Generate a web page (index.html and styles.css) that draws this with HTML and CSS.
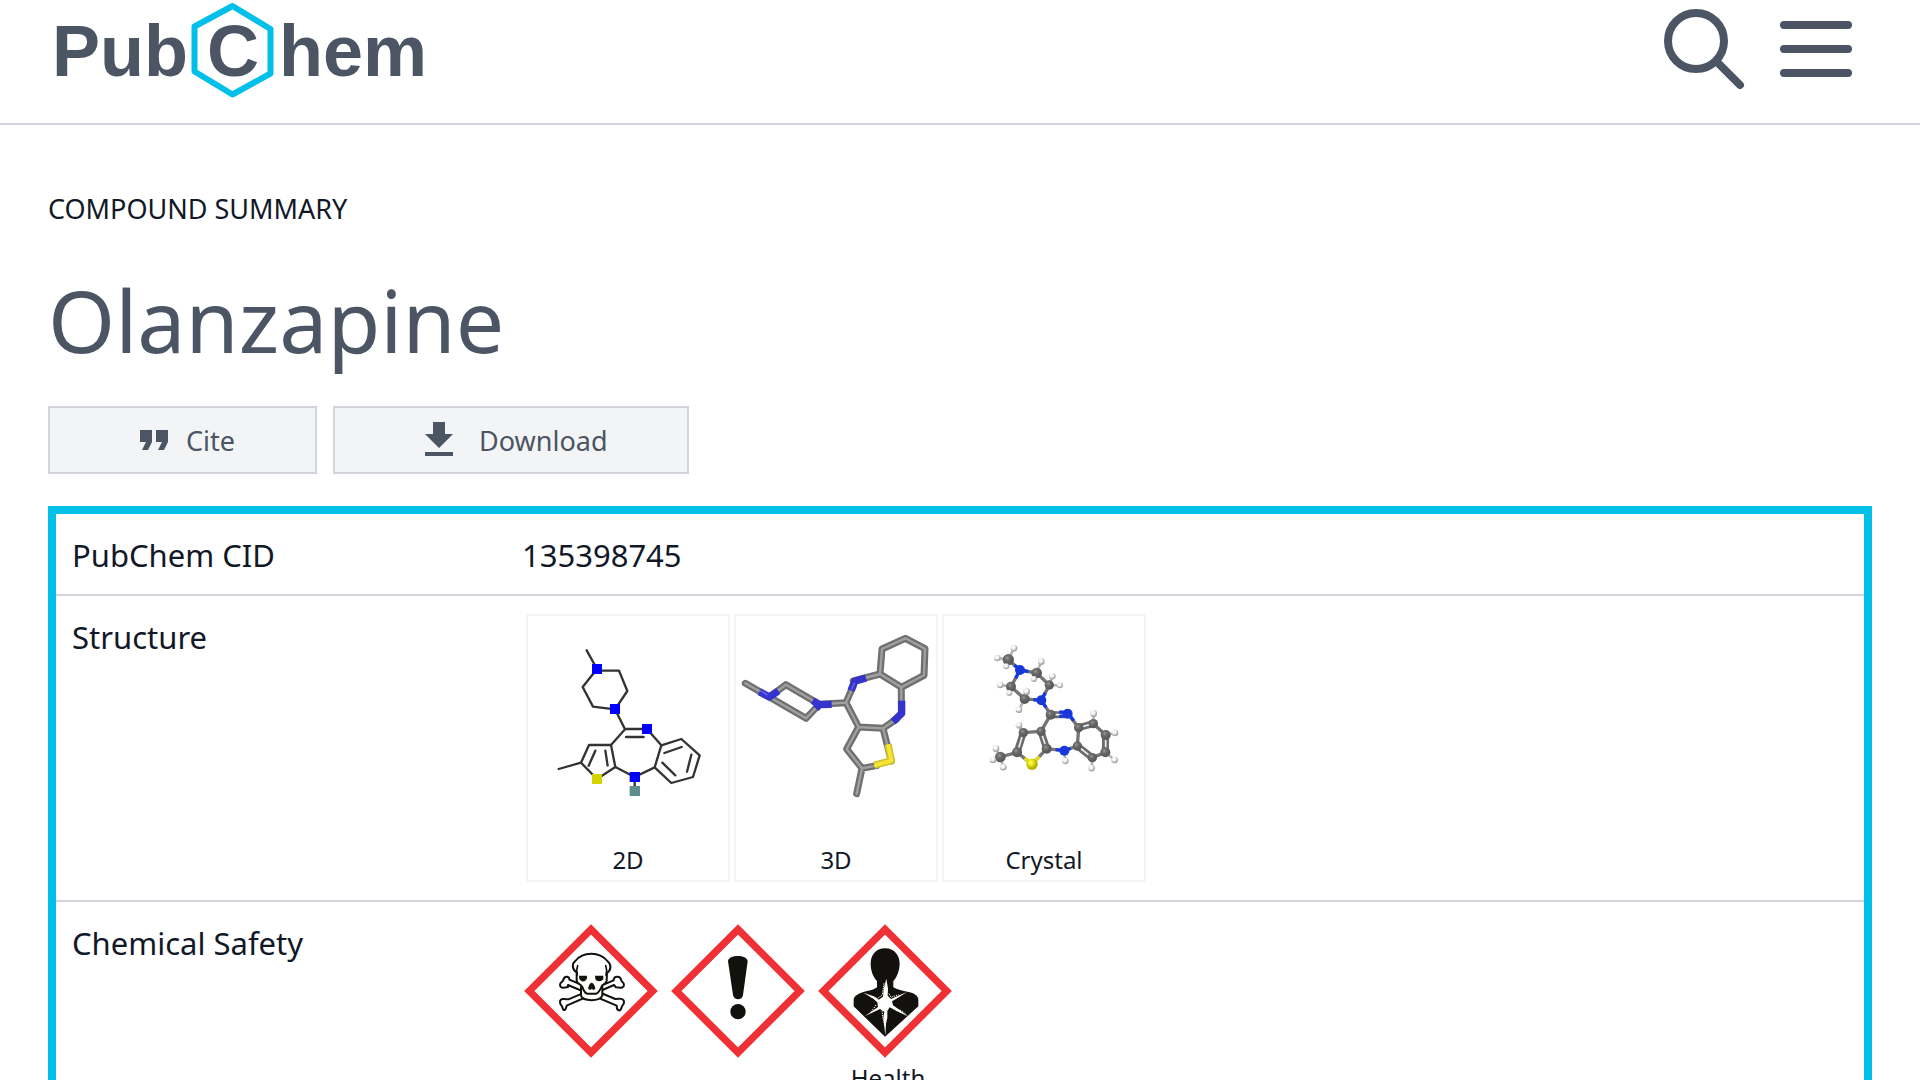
FILE: index.html
```html
<!DOCTYPE html>
<html lang="en">
<head>
<meta charset="utf-8">
<meta name="viewport" content="width=device-width, initial-scale=1">
<title>Olanzapine | PubChem</title>
<link rel="stylesheet" href="styles.css">
</head>
<body>
<header class="site-header">
  <a class="logo" href="#" aria-label="PubChem">
    <svg width="376" height="100" viewBox="50 0 376 100">
      <path class="logo-hex" d="M232.500 6 270.500 29V73.500L232.500 94.500 194.500 71.500V26.500Z"/>
      <text class="logo-text" x="52" y="76">Pub</text>
      <text class="logo-text" x="207" y="76">C</text>
      <text class="logo-text" x="279" y="76">hem</text>
    </svg>
  </a>
  <div class="header-tools">
    <button class="tool" type="button" aria-label="Search">
      <svg width="82" height="84" viewBox="0 0 82 84"><circle cx="32" cy="34" r="28"/><path d="M52 54 76 78"/></svg>
    </button>
    <button class="tool" type="button" aria-label="Menu">
      <svg width="72" height="84" viewBox="0 0 72 84"><path d="M4 18H68M4 42H68M4 66H68"/></svg>
    </button>
  </div>
</header>

<main class="page">
  <p class="kicker">COMPOUND SUMMARY</p>
  <h1 class="title">Olanzapine</h1>
  <div class="actions">
    <button class="btn btn-cite" type="button">
      <svg width="28" height="34" viewBox="0 0 28 34"><path d="M0 7H12V19L8 27H2L6 19H0ZM16 7H28V19L24 27H18L22 19H16Z"/></svg>
      Cite
    </button>
    <button class="btn btn-download" type="button">
      <svg width="28" height="34" viewBox="0 0 28 34"><path d="M8 -1H20V11H28L14 25 0 11H8ZM0 29H28V33H0Z"/></svg>
      Download
    </button>
  </div>

  <table class="summary">
    <tbody>
      <tr>
        <th scope="row">PubChem CID</th>
        <td class="value">135398745</td>
      </tr>
      <tr>
        <th scope="row">Structure</th>
        <td class="media">
          <div class="cards">
            <a class="card" href="#">
              <svg class="mol" viewBox="24 33 600 672">
                <g class="bond2d">
                  <path d="M200 136 231 192M231 197H297L322 258 285 313 219 305 188 246 231 192M285 313 315 373M315 372H381L424 421 404 487 344 516 286 486 273 420 315 373M318 396H371"/>
                  <path d="M273 420H207L183 473 231 522 286 486M183 473 116 492M226 437 206 482M256 437 263 482"/>
                  <path d="M424 421 484 402 539 451 519 516 454 534 404 487M433 444 485 426M514 449 501 500M427 473 466 511M344 516V558"/>
                </g>
                <path fill="#00f" d="M216 177h30v30h-30zM270 297h30v30h-30zM366 357h30v30h-30zM329 501h31v30h-31z"/>
                <path fill="#d4d400" d="M216 507h30v30h-30z"/>
                <path fill="#5f8c8c" d="M329 543h31v30h-31z"/>
              </svg>
              <span>2D</span>
            </a>
            <a class="card" href="#">
              <svg class="mol" viewBox="18 33 600 672">
                <g class="stick">
                  <path class="far" d="M46 235 118 276 168 239 268 298 228 340 118 276M268 298 348 293M370 242 348 293 386 366 350 432 396 490 380 566M386 366 459 370 484 468M459 370 500 342M370 228 450 207 456 132 526 100 585 131 582 211 514 247 450 207M514 247V325M396 490 440 482"/>
                  <path class="near" d="M46 235 118 276 168 239 268 298 228 340 118 276M268 298 348 293M370 242 348 293 386 366 350 432 396 490 380 566M386 366 459 370 484 468M459 370 500 342M370 228 450 207 456 132 526 100 585 131 582 211 514 247 450 207M514 247V325M396 490 440 482"/>
                </g>
                <g fill="none" stroke-width="22" stroke-linejoin="round">
                  <path stroke="#3434cd" d="M88 260 118 276 145 258M248 287 268 299 305 298M268 299 258 311M408 219 374 229 363 257M515 287V325L489 350"/>
                  <path stroke="#cfc22e" d="M474 418 484 467 433 481"/>
                  <path stroke="#f5e632" stroke-width="12" d="M474 418 484 467 433 481"/>
                  <path stroke="#6060eb" stroke-width="5" d="M90 256 112 270M364 254 374 233"/>
                </g>
              </svg>
              <span>3D</span>
            </a>
            <a class="card" href="#">
              <svg class="mol" viewBox="12 33 600 672">
                <defs>
                  <radialGradient id="carbon" cx=".4" cy=".35"><stop offset="0" stop-color="#999"/><stop offset=".4" stop-color="#6f6f6f"/><stop offset="1" stop-color="#5a5a5a"/></radialGradient>
                  <radialGradient id="hydrogen" cx=".4" cy=".35"><stop offset="0" stop-color="#fff"/><stop offset=".6" stop-color="#eee"/><stop offset="1" stop-color="#aaa"/></radialGradient>
                  <radialGradient id="sulfur" cx=".4" cy=".35"><stop offset="0" stop-color="#ff8"/><stop offset=".4" stop-color="#f2ee18"/><stop offset="1" stop-color="#b5b000"/></radialGradient>
                </defs>
                <path class="hbond" d="M205 164 222 130M205 164 172 159M205 164 199 183M290 204 304 170M290 204 282 222M328 240 337 214M328 240 360 241M213 245 181 240M213 245 208 264M254 282 260 260M254 282 237 314M250 383 237 361M181 456 168 431M181 456 159 465M181 456 190 487M373 437 376 468M460 356 461 326M497 390 525 384M496 442 524 465M457 458 455 490"/>
                <path class="cbond" d="M205 164 240 195 290 204 328 240 304 286 254 282 213 245 240 195M304 286 332 329 303 379 250 383 231 442 276 478 320 431 373 437 412 423 416 368 383 325M231 442 181 456"/>
                <path class="double" d="M332 329H383M303 379 320 431M250 383 231 442M416 368 460 356M497 390 496 442M457 458 412 423"/>
                <path class="double-gap" d="M338 329H378M305 386 318 426M247 392 235 433M423 366 452 358M497 400V433M449 452 420 429"/>
                <path class="cbond" d="M460 356 497 390M496 442 457 458"/>
                <path stroke="#1739dc" stroke-width="10" fill="none" d="M223 180 240 195 265 200M240 195 227 220M316 263 304 286 280 284M304 286 318 307M358 321 383 323 401 347M358 334 383 331M347 434 373 437 392 430"/>
                <path stroke="#e5df14" stroke-width="10" fill="none" d="M254 460 276 478 298 455"/>
                <g fill="url(#carbon)"><circle cx="205" cy="164" r="17"/><circle cx="290" cy="204" r="16"/><circle cx="328" cy="240" r="14"/><circle cx="213" cy="245" r="15"/><circle cx="254" cy="282" r="15"/><circle cx="332" cy="329" r="15"/><circle cx="303" cy="379" r="14"/><circle cx="250" cy="383" r="14"/><circle cx="231" cy="442" r="15"/><circle cx="320" cy="431" r="15"/><circle cx="181" cy="456" r="16"/><circle cx="412" cy="423" r="14"/><circle cx="416" cy="368" r="14"/><circle cx="460" cy="356" r="14"/><circle cx="497" cy="390" r="15"/><circle cx="496" cy="442" r="15"/><circle cx="457" cy="458" r="14"/></g>
                <g fill="#1739dc"><circle cx="240" cy="195" r="15"/><circle cx="304" cy="286" r="15"/><circle cx="383" cy="326" r="15"/><circle cx="373" cy="437" r="15"/></g>
                <circle fill="url(#sulfur)" cx="276" cy="478" r="17"/>
                <g fill="url(#hydrogen)"><circle cx="222" cy="130" r="10"/><circle cx="172" cy="159" r="10"/><circle cx="199" cy="184" r="9"/><circle cx="304" cy="170" r="10"/><circle cx="282" cy="222" r="9"/><circle cx="337" cy="214" r="10"/><circle cx="360" cy="241" r="9"/><circle cx="181" cy="240" r="10"/><circle cx="208" cy="264" r="9"/><circle cx="260" cy="260" r="10"/><circle cx="237" cy="314" r="10"/><circle cx="237" cy="361" r="10"/><circle cx="168" cy="431" r="10"/><circle cx="159" cy="465" r="10"/><circle cx="190" cy="487" r="10"/><circle cx="376" cy="468" r="10"/><circle cx="461" cy="326" r="10"/><circle cx="525" cy="384" r="10"/><circle cx="524" cy="465" r="10"/><circle cx="455" cy="490" r="10"/></g>
              </svg>
              <span>Crystal</span>
            </a>
          </div>
        </td>
      </tr>
      <tr>
        <th scope="row">Chemical Safety</th>
        <td class="media">
          <div class="hazards">
            <figure class="hazard">
              <svg width="134" height="134" viewBox="28 41 402 402" role="img" aria-label="Skull and crossbones">
                <path class="diamond" d="M229 57 414 242 229 427 44 242Z"/>
                <g fill="#fff" stroke="#12110e" stroke-width="6" stroke-linejoin="round" stroke-linecap="round">
                  <path d="M160 224 306 286C306 303 318 305 321 291 322 283 328 285 328 275 328 264 315 264 302 266L164 208C166 196 147 197 146 209 145 215 136 214 136 224 137 235 148 233 160 230Z"/>
                  <path d="M298 224 156 286C152 303 146 303 143 290 142 284 135 284 136 274 137 263 151 266 161 267L297 210C295 197 317 195 320 210 321 216 328 214 328 224 327 236 315 231 304 231Z"/>
                  <path d="M199 229V256C205 274 255 274 263 256V229Z"/>
                  <path d="M186 186C172 178 171 160 182 152 191 140 207 130 230 130 253 130 270 142 278 152 291 162 290 179 277 188L276 211C275 223 263 219 260 230 256 240 252 247 245 250H217C208 247 207 239 203 230 197 218 187 222 186 211Z"/>
                </g>
                <path fill="#12110e" d="M193 196H217V204C214 216 199 216 194 206ZM241 196H266V206C261 215 246 215 242 206ZM231 217C225 218 220 230 221 236L227 239 231 235 236 239 242 235C242 229 237 218 231 217Z"/>
                <path fill="none" stroke="#12110e" stroke-width="5" stroke-linecap="round" d="M189 166 186 180 188 194M273 166 276 180 274 194"/>
              </svg>
            </figure>
            <figure class="hazard">
              <svg width="134" height="134" viewBox="19 41 402 402" role="img" aria-label="Exclamation mark">
                <path class="diamond" d="M220 57 405 242 220 427 35 242Z"/>
                <path fill="#12110e" d="M190 153C191 132 248 132 249 153L235 254C233 271 208 271 205 254Z"/>
                <circle cx="220" cy="304" r="23" fill="#12110e"/>
              </svg>
            </figure>
            <figure class="hazard">
              <svg width="134" height="134" viewBox="25 41 402 402" role="img" aria-label="Health hazard">
                <path class="diamond" d="M226 57 411 242 226 427 41 242Z"/>
                <path fill="#12110e" d="M226 114C255 114 270 136 270 160 270 180 260 204 251 212V231C265 240 281 241 300 246 315 249 326 258 326 268V288L226 379 132 288V266C137 251 157 247 169 243 183 240 195 237 202 231V212C190 200 183 180 183 160 183 136 197 114 226 114Z"/>
                <path fill="#fff" d="M230 205 235 235 234 256 244 266 264 257 292 245 264 263 247 273 250 285 270 299 294 318 262 303 240 291 233 302 233 322 229 340 227 376 223 340 221 320 224 304 211 296 192 305 165 318 189 301 205 290 203 276 189 264 161 247 192 258 207 268 220 259 222 237Z"/>
                <path fill="none" stroke="#fff" stroke-width="3" stroke-dasharray="4 3" d="M223 219 218 254 204 264 180 259M238 250 244 261 267 253M199 284 183 307M250 293 276 301 292 315M217 300 219 319 225 346"/>
              </svg>
              <figcaption>Health</figcaption>
            </figure>
          </div>
        </td>
      </tr>
    </tbody>
  </table>
</main>
</body>
</html>
```
FILE: styles.css
```css
* {
  box-sizing: border-box;
}

body {
  margin: 0;
  background: #fff;
  color: #111827;
  font-family: "Noto Sans", "Open Sans", sans-serif;
}

button {
  font-family: inherit;
  cursor: pointer;
}

svg {
  display: block;
  overflow: visible;
}

a {
  color: inherit;
  text-decoration: none;
}

/* Header */
.site-header {
  display: flex;
  justify-content: space-between;
  align-items: flex-start;
  padding: 0 68px 23px 50px;
  border-bottom: 2px solid #d1d5db;
}

.logo-hex {
  fill: none;
  stroke: #00bfe8;
  stroke-width: 6;
  stroke-linejoin: round;
}

.logo-text {
  fill: #4b5563;
  font: bold 72px "Liberation Sans", Arial, sans-serif;
}

.header-tools {
  display: flex;
  gap: 34px;
  padding-top: 7px;
}

.tool {
  padding: 0;
  border: 0;
  background: none;
}

.tool svg {
  fill: none;
  stroke: #4b5563;
  stroke-width: 8;
  stroke-linecap: round;
}

/* Page heading */
.page {
  padding: 64px 48px;
}

.kicker {
  margin: 0;
  font-size: 27px;
  line-height: 40px;
}

.title {
  margin: 35px 0 30px;
  color: #4b5563;
  font-size: 86px;
  font-weight: 400;
  line-height: 112px;
}

.actions {
  display: flex;
  gap: 16px;
  margin-bottom: 32px;
}

.btn {
  display: flex;
  align-items: center;
  height: 68px;
  padding: 0 80px 0 90px;
  border: 2px solid #d1d5db;
  background: #f3f4f6;
  color: #4b5563;
  font-size: 27px;
}

.btn svg {
  fill: currentColor;
}

.btn-cite {
  gap: 18px;
}

.btn-download {
  gap: 26px;
}

/* Summary table */
.summary {
  width: 100%;
  border: 8px solid #00bfe8;
  border-spacing: 0;
  table-layout: fixed;
}

.summary th,
.summary td {
  border-bottom: 2px solid #d1d5db;
  text-align: left;
  vertical-align: top;
}

.summary th {
  width: 450px;
  padding: 20px 16px 18px;
  font-size: 31px;
  font-weight: 400;
  line-height: 42px;
}

.summary .value {
  padding: 20px 16px 18px;
  font-size: 31px;
  line-height: 42px;
}

.summary .media {
  padding: 18px 16px;
}

.summary tr:last-child > * {
  border-bottom: 0;
}

.cards {
  display: flex;
  gap: 4px;
  padding-left: 4px;
}

.card {
  width: 204px;
  border: 2px solid #f3f4f6;
  font-size: 24px;
  line-height: 40px;
  text-align: center;
}

.mol {
  width: 200px;
  height: 224px;
}

.bond2d {
  fill: none;
  stroke: #333;
  stroke-width: 7;
  stroke-linecap: round;
  stroke-linejoin: round;
}

.stick {
  fill: none;
  stroke-linecap: round;
  stroke-linejoin: round;
}

.far {
  stroke: #707070;
  stroke-width: 21;
}

.near {
  stroke: #a0a0a0;
  stroke-width: 7;
}

.hbond {
  fill: none;
  stroke: #b5b5b5;
  stroke-width: 8;
}

.cbond {
  fill: none;
  stroke: #747474;
  stroke-width: 10;
}

.double {
  fill: none;
  stroke: #6b6b6b;
  stroke-width: 21;
}

.double-gap {
  fill: none;
  stroke: #eee;
  stroke-width: 5;
}

/* Hazard pictograms */
.hazards {
  display: flex;
  gap: 7px;
  padding: 4px 0 0 2px;
}

.hazard {
  width: 140px;
  margin: 0;
}

.hazard figcaption {
  margin-top: 5px;
  font-size: 24px;
  line-height: 30px;
  text-align: center;
}

.diamond {
  fill: #fff;
  stroke: #ef3034;
  stroke-width: 22;
}
```
